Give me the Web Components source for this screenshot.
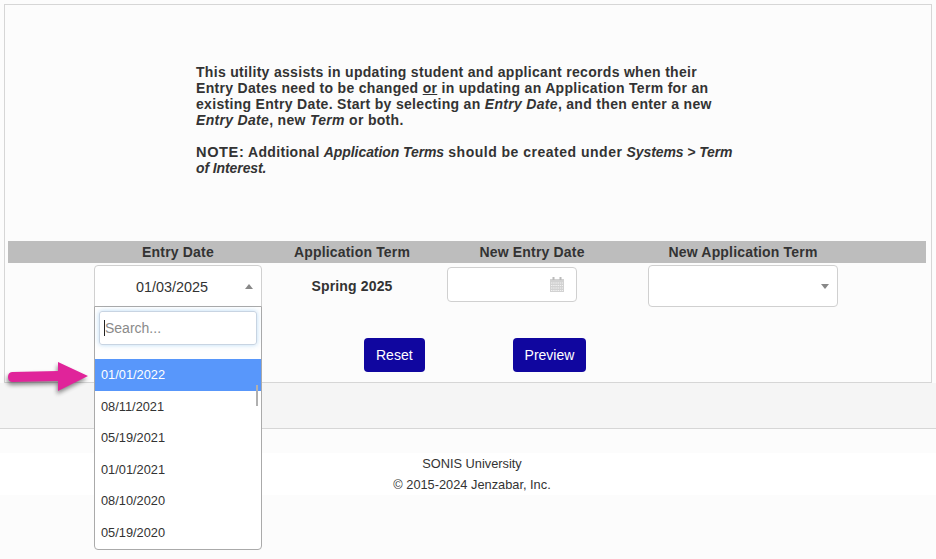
<!DOCTYPE html>
<html>
<head>
<meta charset="utf-8">
<title>Entry Date Utility</title>
<style>
  html, body { margin: 0; padding: 0; }
  body {
    height: 559px;
    overflow: hidden;
    background: #fcfcfc;
    font-family: "Liberation Sans", Arial, sans-serif;
    color: #333;
    position: relative;
  }
</style>
</head>
<body>

<utility-panel>
  <intro-text>
    This utility assists in updating student and applicant records when their
    Entry Dates need to be changed <u>or</u> in updating an Application Term for an
    existing Entry Date. Start by selecting an <i>Entry Date</i>, and then enter a new
    <i>Entry Date</i>, new <i>Term</i> or both.
    <br><br>
    <b style="font-size:14.6px;letter-spacing:.6px">NOTE:</b> Additional <i style="letter-spacing:-.08px">Application Terms</i> <span style="letter-spacing:.5px">should be created under</span> <i style="letter-spacing:-.1px">Systems &gt; Term of Interest.</i>
  </intro-text>
  <date-form></date-form>
</utility-panel>
<gray-band></gray-band>
<page-footer></page-footer>
<pink-arrow></pink-arrow>

<script>
class UtilityPanel extends HTMLElement {
  constructor() {
    super();
    this.attachShadow({ mode: "open" });
  }

  connectedCallback() {
    this.shadowRoot.innerHTML = `
      <style>
        :host {
          display: block;
          box-sizing: border-box;
          height: 379px;
          margin: 4px 4px 0 4px;
          padding: 0 5px 0 3px;
          background: #fcfcfc;
          border: 1px solid #d6d6d6;
        }
      </style>
      <slot></slot>
    `;
  }
}

class IntroText extends HTMLElement {
  constructor() {
    super();
    this.attachShadow({ mode: "open" });
  }

  connectedCallback() {
    this.shadowRoot.innerHTML = `
      <style>
        :host {
          display: block;
          width: 540px;
          margin-left: 188px;
          padding-top: 59px;
          font-size: 14px;
          letter-spacing: .31px;
          font-weight: bold;
          line-height: 16px;
          color: #333;
        }
      </style>
      <slot></slot>
    `;
  }
}

class DateForm extends HTMLElement {
  constructor() {
    super();
    this.attachShadow({ mode: "open" });
  }

  connectedCallback() {
    this.shadowRoot.innerHTML = `
      <style>
        :host { display: block; margin-top: 65px; }
        .row {
          display: grid;
          grid-template-columns: 168px 180px 180px 242px;
          padding-left: 86px;
          text-align: center;
        }
        .head {
          background: #bdbdbd;
          height: 22px;
          line-height: 22px;
          font-size: 14px;
          letter-spacing: .18px;
          font-weight: bold;
          color: #333;
        }
        .fields { padding-top: 2px; height: 73px; align-items: start; }
        .term { font-size: 14px; letter-spacing: .15px; font-weight: bold; line-height: 42px; }
        .date { padding: 2px 0 0 5px; display: flex; }
        .new-term { display: flex; justify-content: center; }
        .actions { display: flex; padding-left: 356px; gap: 88px; }
      </style>
      <div class="row head">
        <span>Entry Date</span>
        <span>Application Term</span>
        <span>New Entry Date</span>
        <span>New Application Term</span>
      </div>
      <div class="row fields">
        <entry-select open value="01/03/2025"></entry-select>
        <div class="term">Spring 2025</div>
        <div class="date"><date-input></date-input></div>
        <div class="new-term"><entry-select style="width:190px"></entry-select></div>
      </div>
      <div class="actions">
        <action-button>Reset</action-button>
        <action-button>Preview</action-button>
      </div>
    `;
  }
}

class EntrySelect extends HTMLElement {
  constructor() {
    super();
    this.attachShadow({ mode: "open" });
  }

  connectedCallback() {
    const open = this.hasAttribute("open");
    const value = this.getAttribute("value") || "";
    const dates = ["01/01/2022", "08/11/2021", "05/19/2021", "01/01/2021", "08/10/2020", "05/19/2020"];
    const options = dates.map((d, i) => `<li class="${i === 0 ? "on" : ""}">${d}</li>`).join("");

    this.shadowRoot.innerHTML = `
      <style>
        :host { display: block; position: relative; width: 168px; text-align: left; }
        .box {
          box-sizing: border-box;
          height: 42px;
          display: flex;
          align-items: center;
          justify-content: center;
          padding: 1px 12px 0 0;
          background: #fff;
          border: 1px solid #d0d0d0;
          border-radius: 4px;
          font-size: 14.4px;
          color: #333;
        }
        .open .box { border-bottom-left-radius: 0; border-bottom-right-radius: 0; }
        .caret {
          position: absolute;
          right: 9px;
          top: 19px;
          width: 0;
          height: 0;
          border-left: 4px solid transparent;
          border-right: 4px solid transparent;
          border-top: 5px solid #888;
        }
        .open .caret { border-top: 0; border-bottom: 5px solid #888; }
        .drop {
          position: absolute;
          z-index: 5;
          left: 0;
          right: 0;
          top: 41px;
          box-sizing: border-box;
          height: 244px;
          background: #fff;
          border: 1px solid #aaa;
          border-radius: 0 0 4px 4px;
        }
        .search {
          box-sizing: border-box;
          height: 34px;
          margin: 4px 4px 0 4px;
          padding-left: 4px;
          display: flex;
          align-items: center;
          border: 1px solid #c8d4e2;
          border-radius: 3px;
          box-shadow: 0 0 5px rgba(102, 175, 233, .45);
          font-size: 14px;
          color: #8a8a8a;
        }
        .search i { width: 1px; height: 16px; background: #222; }
        ul { list-style: none; margin: 14px 0 0; padding: 0; }
        li {
          height: 31.5px;
          line-height: 31.5px;
          padding-left: 6px;
          font-size: 12.8px;
          color: #333;
        }
        li.on { background: #5897fb; color: #fff; }
        .bar {
          position: absolute;
          right: 3px;
          top: 78px;
          width: 2px;
          height: 21px;
          background: #b0b0b0;
        }
      </style>
      <div class="${open ? "open" : ""}">
        <div class="box">${value}</div>
        <div class="caret"></div>
        ${open ? `
        <div class="drop">
          <div class="search"><i></i><span>Search...</span></div>
          <ul>${options}</ul>
          <div class="bar"></div>
        </div>` : ""}
      </div>
    `;
  }
}

class DateInput extends HTMLElement {
  constructor() {
    super();
    this.attachShadow({ mode: "open" });
  }

  connectedCallback() {
    this.shadowRoot.innerHTML = `
      <style>
        :host {
          display: flex;
          box-sizing: border-box;
          width: 130px;
          height: 35px;
          align-items: center;
          justify-content: flex-end;
          padding-right: 12px;
          background: #fff;
          border: 1px solid #d0d0d0;
          border-radius: 4px;
        }
        svg { display: block; }
      </style>
      <svg width="14" height="15" viewBox="0 0 14 15">
        <rect x="0" y="2" width="14" height="13" fill="#d2d2d2"/>
        <rect x="2.5" y="0" width="2" height="3" fill="#bbb"/>
        <rect x="9.5" y="0" width="2" height="3" fill="#bbb"/>
        <path d="M1 6h12M1 8.5h12M1 11h12M1 13.5h12" stroke="#f2f2f2" stroke-width="1" stroke-dasharray="1.4 .8"/>
      </svg>
    `;
  }
}

class ActionButton extends HTMLElement {
  constructor() {
    super();
    this.attachShadow({ mode: "open" });
  }

  connectedCallback() {
    this.shadowRoot.innerHTML = `
      <style>
        :host {
          display: block;
          height: 34px;
          padding: 0 12px;
          line-height: 34px;
          background: #10069f;
          border-radius: 4px;
          color: #fff;
          font-size: 14px;
        }
      </style>
      <slot></slot>
    `;
  }
}

class GrayBand extends HTMLElement {
  constructor() {
    super();
    this.attachShadow({ mode: "open" });
  }

  connectedCallback() {
    this.shadowRoot.innerHTML = `
      <style>
        :host {
          display: block;
          height: 45px;
          background: #f5f5f5;
          border-bottom: 1px solid #d6d6d6;
        }
      </style>
    `;
  }
}

class PageFooter extends HTMLElement {
  constructor() {
    super();
    this.attachShadow({ mode: "open" });
  }

  connectedCallback() {
    this.shadowRoot.innerHTML = `
      <style>
        :host {
          display: block;
          margin-top: 24px;
          height: 42px;
          background: #fff;
          padding-left: 8px;
          text-align: center;
          font-size: 12.8px;
          line-height: 21px;
          color: #333;
        }
      </style>
      <div>SONIS University</div>
      <div>© 2015-2024 Jenzabar, Inc.</div>
    `;
  }
}

class PinkArrow extends HTMLElement {
  constructor() {
    super();
    this.attachShadow({ mode: "open" });
  }

  connectedCallback() {
    this.shadowRoot.innerHTML = `
      <style>
        :host { position: absolute; left: 0; top: 355px; width: 100px; height: 50px; }
        svg { display: block; filter: drop-shadow(-1px 3px 2px rgba(0, 0, 0, .45)); }
      </style>
      <svg width="100" height="50" viewBox="0 0 100 50">
        <path d="M12 17 L58 16 L58 7 L88 21 L58 36 L58 26 L12 27 Q8 26.500 8 22 Q8 17.500 12 17 Z" fill="#e0249a"/>
      </svg>
    `;
  }
}

customElements.define("utility-panel", UtilityPanel);
customElements.define("intro-text", IntroText);
customElements.define("date-form", DateForm);
customElements.define("entry-select", EntrySelect);
customElements.define("date-input", DateInput);
customElements.define("action-button", ActionButton);
customElements.define("gray-band", GrayBand);
customElements.define("page-footer", PageFooter);
customElements.define("pink-arrow", PinkArrow);
</script>
</body>
</html>
